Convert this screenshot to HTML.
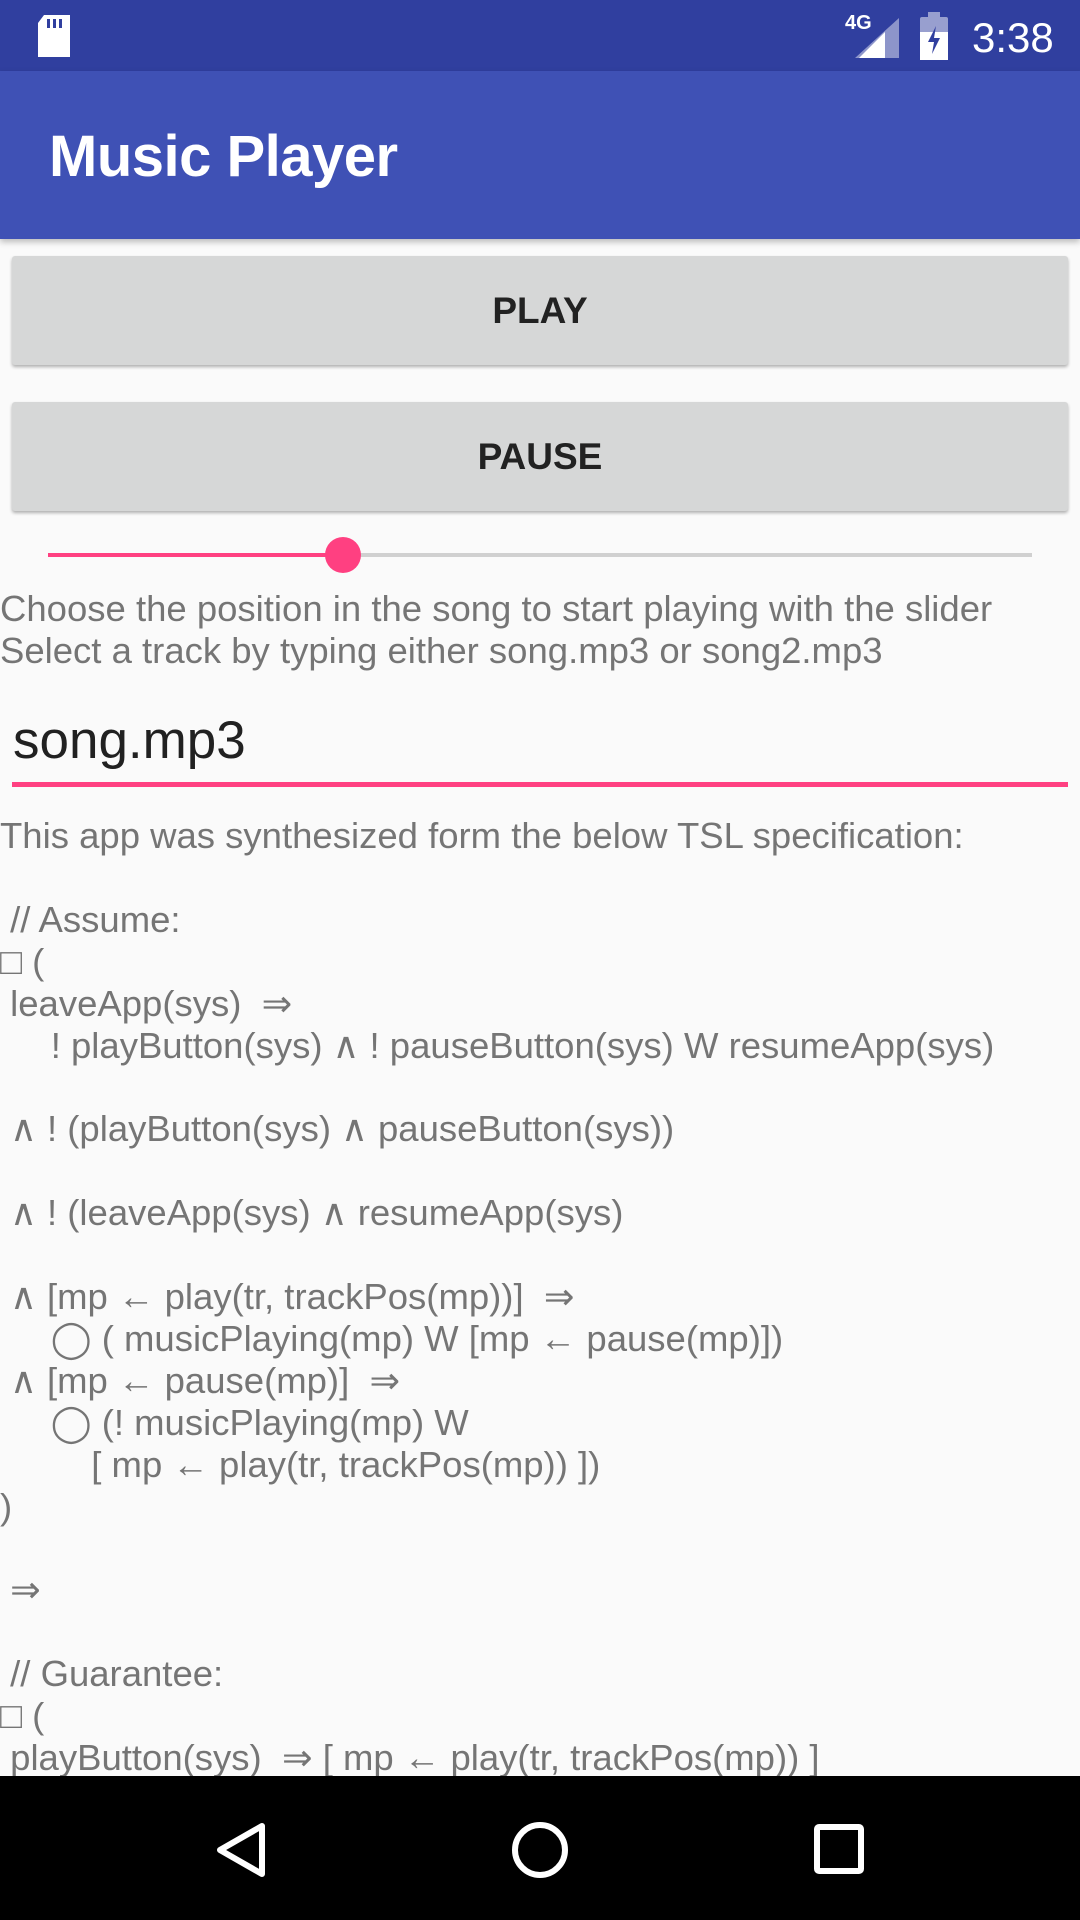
<!DOCTYPE html>
<html><head><meta charset="utf-8"><style>
*{margin:0;padding:0;box-sizing:border-box}
body{width:1080px;height:1920px;background:#fafafa;position:relative;overflow:hidden;font-family:"Liberation Sans","DejaVu Sans",sans-serif}
.sb{position:absolute;left:0;top:0;width:1080px;height:71px;background:#303f9f}
.ab{position:absolute;left:0;top:71px;width:1080px;height:168px;background:#3f51b5;box-shadow:0 3px 6px rgba(0,0,0,.25)}
.ab span{position:absolute;left:49px;top:52px;color:#fff;font-size:58px;font-weight:bold;letter-spacing:-0.5px}
.btn{position:absolute;left:12px;width:1056px;height:109px;background:#d6d7d7;border-radius:3px;box-shadow:0 2px 3px rgba(0,0,0,.3);text-align:center;line-height:109px;font-size:37px;font-weight:bold;color:#222}
.txt{position:absolute;left:0;color:#757575;font-size:36.5px;white-space:pre;line-height:41.9px}
.nav{position:absolute;left:0;top:1776px;width:1080px;height:144px;background:#000}
</style></head><body>
<div class="sb">
 <svg style="position:absolute;left:36px;top:15px" width="36" height="42" viewBox="0 0 36 42"><path d="M8 0H34V42H2V8Z" fill="#fff"/><rect x="11" y="4" width="3" height="9" fill="#303f9f"/><rect x="17" y="4" width="3" height="9" fill="#303f9f"/><rect x="23" y="4" width="3" height="9" fill="#303f9f"/></svg>
 <div style="position:absolute;left:845px;top:12px;color:#fff;font-size:20px;font-weight:bold">4G</div>
 <svg style="position:absolute;left:855px;top:18px" width="45" height="40"><path d="M44 0V40H0Z" fill="#fff" opacity=".45"/><path d="M30 14V40H4Z" fill="#fff"/></svg>
 <svg style="position:absolute;left:920px;top:12px" width="28" height="48"><rect x="8" y="0" width="12" height="5" fill="#fff" opacity=".5"/><rect x="0" y="5" width="28" height="43" rx="2" fill="#fff" opacity=".5"/><rect x="0" y="20" width="28" height="28" fill="#fff"/><path d="M16 14L8 30H14L12 42L20 26H14Z" fill="#303f9f"/></svg>
 <div style="position:absolute;left:972px;top:14px;color:#fff;font-size:42px">3:38</div>
</div>
<div class="ab"><span>Music Player</span></div>
<div class="btn" style="top:256px">PLAY</div>
<div class="btn" style="top:402px">PAUSE</div>
<div style="position:absolute;left:48px;top:553px;width:984px;height:4px;background:#d0d0d0"></div>
<div style="position:absolute;left:48px;top:553px;width:295px;height:4px;background:#ff4081"></div>
<div style="position:absolute;left:325px;top:537px;width:36px;height:36px;border-radius:50%;background:#ff4081"></div>
<div class="txt" style="top:588px">Choose the position in the song to start playing with the slider
Select a track by typing either song.mp3 or song2.mp3</div>
<div style="position:absolute;left:13px;top:710px;font-size:53px;color:#212121">song.mp3</div>
<div style="position:absolute;left:12px;top:782px;width:1056px;height:5px;background:#ff4081"></div>
<div class="txt" style="top:815px">This app was synthesized form the below TSL specification:

 // Assume:
□ (
 leaveApp(sys)  ⇒
     ! playButton(sys) ∧ ! pauseButton(sys) W resumeApp(sys)

 ∧ ! (playButton(sys) ∧ pauseButton(sys))

 ∧ ! (leaveApp(sys) ∧ resumeApp(sys)

 ∧ [mp ← play(tr, trackPos(mp))]  ⇒
     ◯ ( musicPlaying(mp) W [mp ← pause(mp)])
 ∧ [mp ← pause(mp)]  ⇒
     ◯ (! musicPlaying(mp) W
         [ mp ← play(tr, trackPos(mp)) ])
)

 ⇒

 // Guarantee:
□ (
 playButton(sys)  ⇒ [ mp ← play(tr, trackPos(mp)) ]</div>
<div class="nav">
 <svg style="position:absolute;left:210px;top:44px" width="60" height="60"><path d="M52 6V54L10 30Z" fill="none" stroke="#fff" stroke-width="6" stroke-linejoin="round"/></svg>
 <svg style="position:absolute;left:508px;top:44px" width="64" height="64"><circle cx="32" cy="30" r="25" fill="none" stroke="#fff" stroke-width="6"/></svg>
 <svg style="position:absolute;left:812px;top:46px" width="56" height="56"><rect x="5" y="5" width="44" height="44" rx="2" fill="none" stroke="#fff" stroke-width="6"/></svg>
</div>
</body></html>
